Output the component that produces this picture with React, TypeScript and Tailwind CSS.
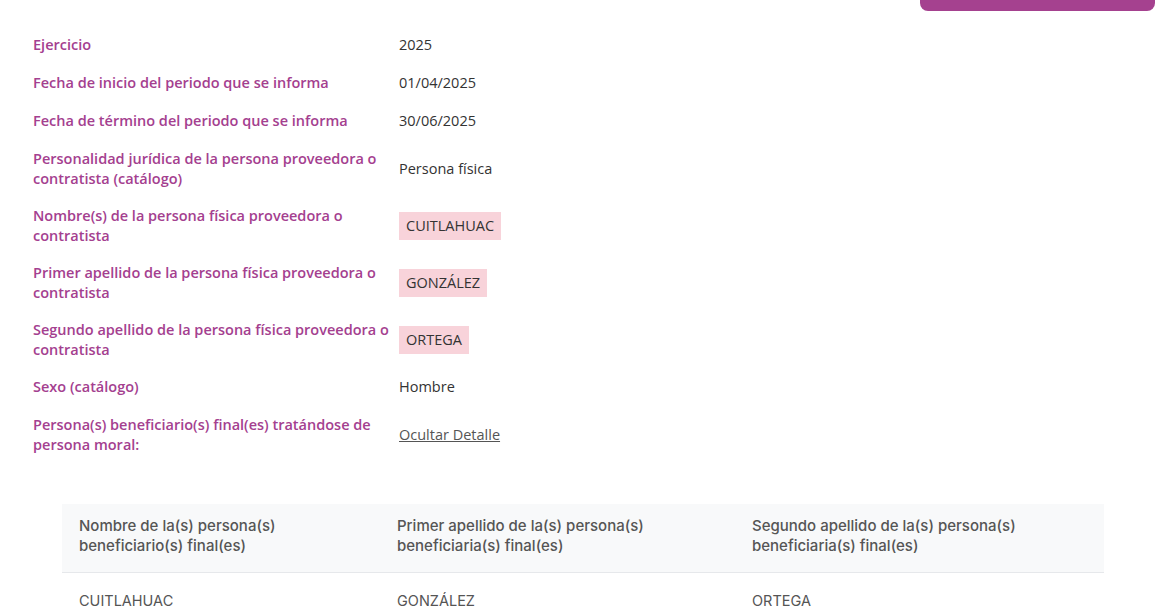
import React from 'react';

type Row = {
  label: string;
  value: string;
  highlight?: boolean;
  link?: boolean;
};

const rows: Row[] = [
  { label: 'Ejercicio', value: '2025' },
  { label: 'Fecha de inicio del periodo que se informa', value: '01/04/2025' },
  { label: 'Fecha de término del periodo que se informa', value: '30/06/2025' },
  { label: 'Personalidad jurídica de la persona proveedora o contratista (catálogo)', value: 'Persona física' },
  { label: 'Nombre(s) de la persona física proveedora o contratista', value: 'CUITLAHUAC', highlight: true },
  { label: 'Primer apellido de la persona física proveedora o contratista', value: 'GONZÁLEZ', highlight: true },
  { label: 'Segundo apellido de la persona física proveedora o contratista', value: 'ORTEGA', highlight: true },
  { label: 'Sexo (catálogo)', value: 'Hombre' },
  { label: 'Persona(s) beneficiario(s) final(es) tratándose de persona moral:', value: 'Ocultar Detalle', link: true },
];

const beneficiarios = [
  { nombre: 'CUITLAHUAC', primer: 'GONZÁLEZ', segundo: 'ORTEGA' },
];

const DetailRow: React.FC<{ row: Row }> = ({ row }) => (
  <div className="grid grid-cols-[366px_1fr] items-center py-[9px]">
    <div className="text-[14.5px] leading-[19.5px] font-semibold text-[#a4408f] pr-[2px]">{row.label}</div>
    <div className="text-[14.5px] leading-[20px] text-[#333333]">
      {row.highlight ? (
        <span className="inline-block bg-[#f8d3da] px-[7px] py-[4px]">{row.value}</span>
      ) : row.link ? (
        <a href="#" className="underline text-[#555555]">{row.value}</a>
      ) : (
        row.value
      )}
    </div>
  </div>
);

export default function App() {
  return (
    <div className="min-h-screen bg-white" style={{ fontFamily: '"Open Sans", "Noto Sans", sans-serif' }}>
      <div className="flex justify-end pr-[15px]">
        <button className="-mt-[25px] h-[36px] w-[235px] rounded-lg bg-[#a5418f]" />
      </div>

      <div className="px-[33px] pt-[15px]">
        {rows.map((row) => (
          <DetailRow key={row.label} row={row} />
        ))}
      </div>

      <div
        className="ml-[62px] mt-[41px] w-[1042px] leading-[20px] text-[#555555]"
        style={{ fontFamily: 'Inter, "Liberation Sans", sans-serif' }}
      >
        <div className="grid grid-cols-[318px_355px_1fr] bg-[#f8f9fa] border-b border-[#e6e8eb] pt-[12px] pb-[16px] text-[15px] font-medium">
          <div className="pl-[17px] pr-4">Nombre de la(s) persona(s) beneficiario(s) final(es)</div>
          <div className="pl-[17px] pr-4">Primer apellido de la(s) persona(s) beneficiaria(s) final(es)</div>
          <div className="pl-[17px] pr-4">Segundo apellido de la(s) persona(s) beneficiaria(s) final(es)</div>
        </div>
        {beneficiarios.map((b) => (
          <div key={b.nombre} className="grid grid-cols-[318px_355px_1fr] py-[18px] text-[14.5px]">
            <div className="pl-[17px]">{b.nombre}</div>
            <div className="pl-[17px]">{b.primer}</div>
            <div className="pl-[17px]">{b.segundo}</div>
          </div>
        ))}
      </div>
    </div>
  );
}
